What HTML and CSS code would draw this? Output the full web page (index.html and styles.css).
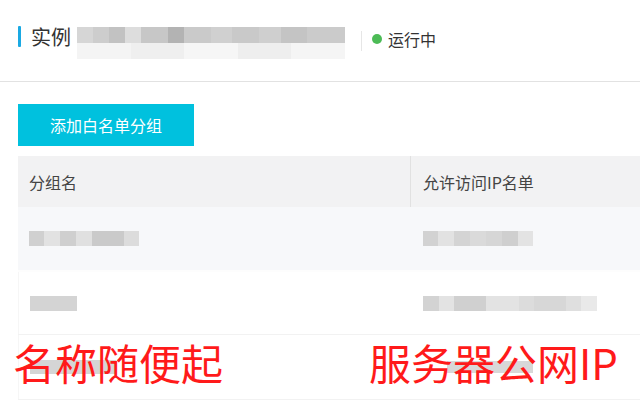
FILE: index.html
```html
<!DOCTYPE html>
<html lang="zh-CN">
<head>
<meta charset="utf-8">
<title>白名单设置</title>
<link rel="stylesheet" href="styles.css">
</head>
<body>
<div class="page">
  <header class="header">
    <span class="bar"></span>
    <h1 class="title">实例</h1>
    <div class="redact redact-name">
      <div class="rn-top"></div>
      <div class="rn-bottom"></div>
    </div>
    <span class="sep"></span>
    <span class="status"><span class="dot"></span>运行中</span>
  </header>

  <main class="content">
    <button class="btn-add">添加白名单分组</button>
    <div class="table">
      <div class="row head">
        <div class="cell c1">分组名</div>
        <div class="cell c2">允许访问IP名单</div>
      </div>
      <div class="row r1">
        <div class="cell c1"><span class="blk b-name1"></span></div>
        <div class="cell c2"><span class="blk b-ip1"></span></div>
      </div>
      <div class="row r2">
        <div class="cell c1"><span class="blk b-name2"></span></div>
        <div class="cell c2"><span class="blk b-ip2"></span></div>
      </div>
      <div class="row r3">
        <div class="cell c1"><span class="blk b-name3"></span></div>
        <div class="cell c2"><span class="blk b-ip3"></span></div>
      </div>
      <div class="note note-left">名称随便起</div>
      <div class="note note-right">服务器公网IP</div>
    </div>
  </main>
</div>
</body>
</html>
```
FILE: styles.css
```css
* { box-sizing: border-box; }
html, body { margin: 0; padding: 0; background: #fff; }
body {
  font-family: "Noto Sans CJK SC", "Noto Sans", sans-serif;
  color: #333;
  width: 640px;
  height: 411px;
  overflow: hidden;
}
.header {
  height: 82px;
  border-bottom: 1px solid #e2e2e2;
  display: flex;
  align-items: flex-start;
  padding: 26px 0 0 18px;
}
.bar {
  width: 3px;
  height: 21px;
  background: #1aa9e3;
  border-radius: 1px;
}
.title {
  margin: 0 6px 0 10px;
  font-size: 20px;
  font-weight: 400;
  line-height: 21px;
  color: #333;
  white-space: nowrap;
}
.redact-name {
  width: 268px;
  height: 32px;
  margin-top: 1px;
  display: flex;
  flex-direction: column;
}
.rn-top {
  height: 16px;
  background: linear-gradient(90deg,
    #d6d6d6 0 6%, #cdcdcd 6% 12%, #c2c2c2 12% 18%, #dddddd 18% 24%,
    #c7c7c7 24% 34%, #b3b3b3 34% 40%, #cacaca 40% 50%, #d0d0d0 50% 58%,
    #c9c9c9 58% 68%, #cfcfcf 68% 76%, #c4c4c4 76% 86%, #cbcbcb 86% 100%);
}
.rn-bottom {
  height: 16px;
  background: linear-gradient(90deg,
    #f4f4f4 0 20%, #efefef 20% 40%, #f6f6f6 40% 60%, #eeeeee 60% 80%, #f5f5f5 80% 100%);
}
.sep {
  width: 1px;
  height: 20px;
  margin: 5px 0 0 16px;
  background: #e6e6e6;
}
.status {
  display: flex;
  align-items: center;
  margin: 1px 0 0 10px;
  font-size: 16px;
  line-height: 24px;
  color: #333;
}
.dot {
  width: 10px;
  height: 10px;
  border-radius: 50%;
  background: #4cbb56;
  margin-right: 6px;
}
.content {
  padding: 22px 0 0 18px;
}
.btn-add {
  display: block;
  width: 176px;
  height: 42px;
  border: 0;
  background: #00c1de;
  color: #fff;
  font-family: "Noto Sans CJK SC", sans-serif;
  font-size: 16px;
  padding: 0;
  margin: 0;
}
.table {
  position: relative;
  margin-top: 10px;
  width: 622px;
}
.row {
  display: flex;
}
.cell {
  display: flex;
  align-items: center;
  padding-left: 11px;
}
.c1 { width: 393px; }
.c2 { flex: 1; padding-left: 12px; }
.head {
  height: 51px;
  background: #f2f2f3;
  font-size: 16px;
  color: #444;
}
.head .c1 { border-right: 1px solid #e1e1e1; }
.r1 {
  height: 63px;
  background: #f7f8fa;
}
.r2 {
  height: 65px;
  background: #fff;
  border-top: 2px solid #fdfdfd;
  border-bottom: 1px solid #f2f2f2;
}
.r3 {
  height: 65px;
  border-bottom: 1px solid #f2f2f2;
}
.r2 .c1, .r3 .c1 { border-left: 1px solid #f6f6f6; }
.blk {
  display: block;
  height: 15px;
}
.b-name1 {
  width: 110px;
  background: linear-gradient(90deg,
    #d0d0d0 0 14%, #e2e2e2 14% 28%, #cfcfcf 28% 43%, #e0e0e0 43% 57%,
    #cacaca 57% 86%, #dcdcdc 86% 100%);
}
.b-ip1 {
  width: 110px;
  background: linear-gradient(90deg,
    #d2d2d2 0 14%, #e2e2e2 14% 28%, #d4d4d4 28% 43%, #dadada 43% 57%,
    #d6d6d6 57% 72%, #cfcfcf 72% 86%, #e3e3e3 86% 100%);
}
.b-name2 {
  width: 47px;
  background: #d4d4d4;
}
.b-ip2 {
  width: 174px;
  background: linear-gradient(90deg,
    #d3d3d3 0 9%, #e3e3e3 9% 18%, #d0d0d0 18% 36%, #e3e3e3 36% 55%,
    #dcdcdc 55% 64%, #d7d7d7 64% 82%, #dfdfdf 82% 91%, #e9e9e9 91% 100%);
}
.b-name3 {
  width: 86px;
  height: 14px;
  background: #d5d5d5;
}
.b-ip3 {
  width: 86px;
  height: 12px;
  margin-left: 24px;
  background: #d8d8d8;
}
.note {
  position: absolute;
  font-family: "Noto Sans CJK SC", sans-serif;
  color: #ff1a1a;
  font-size: 42px;
  line-height: 48px;
  white-space: nowrap;
  top: 182px;
}
.note-left { left: -5px; }
.note-right { left: 351px; }
```
